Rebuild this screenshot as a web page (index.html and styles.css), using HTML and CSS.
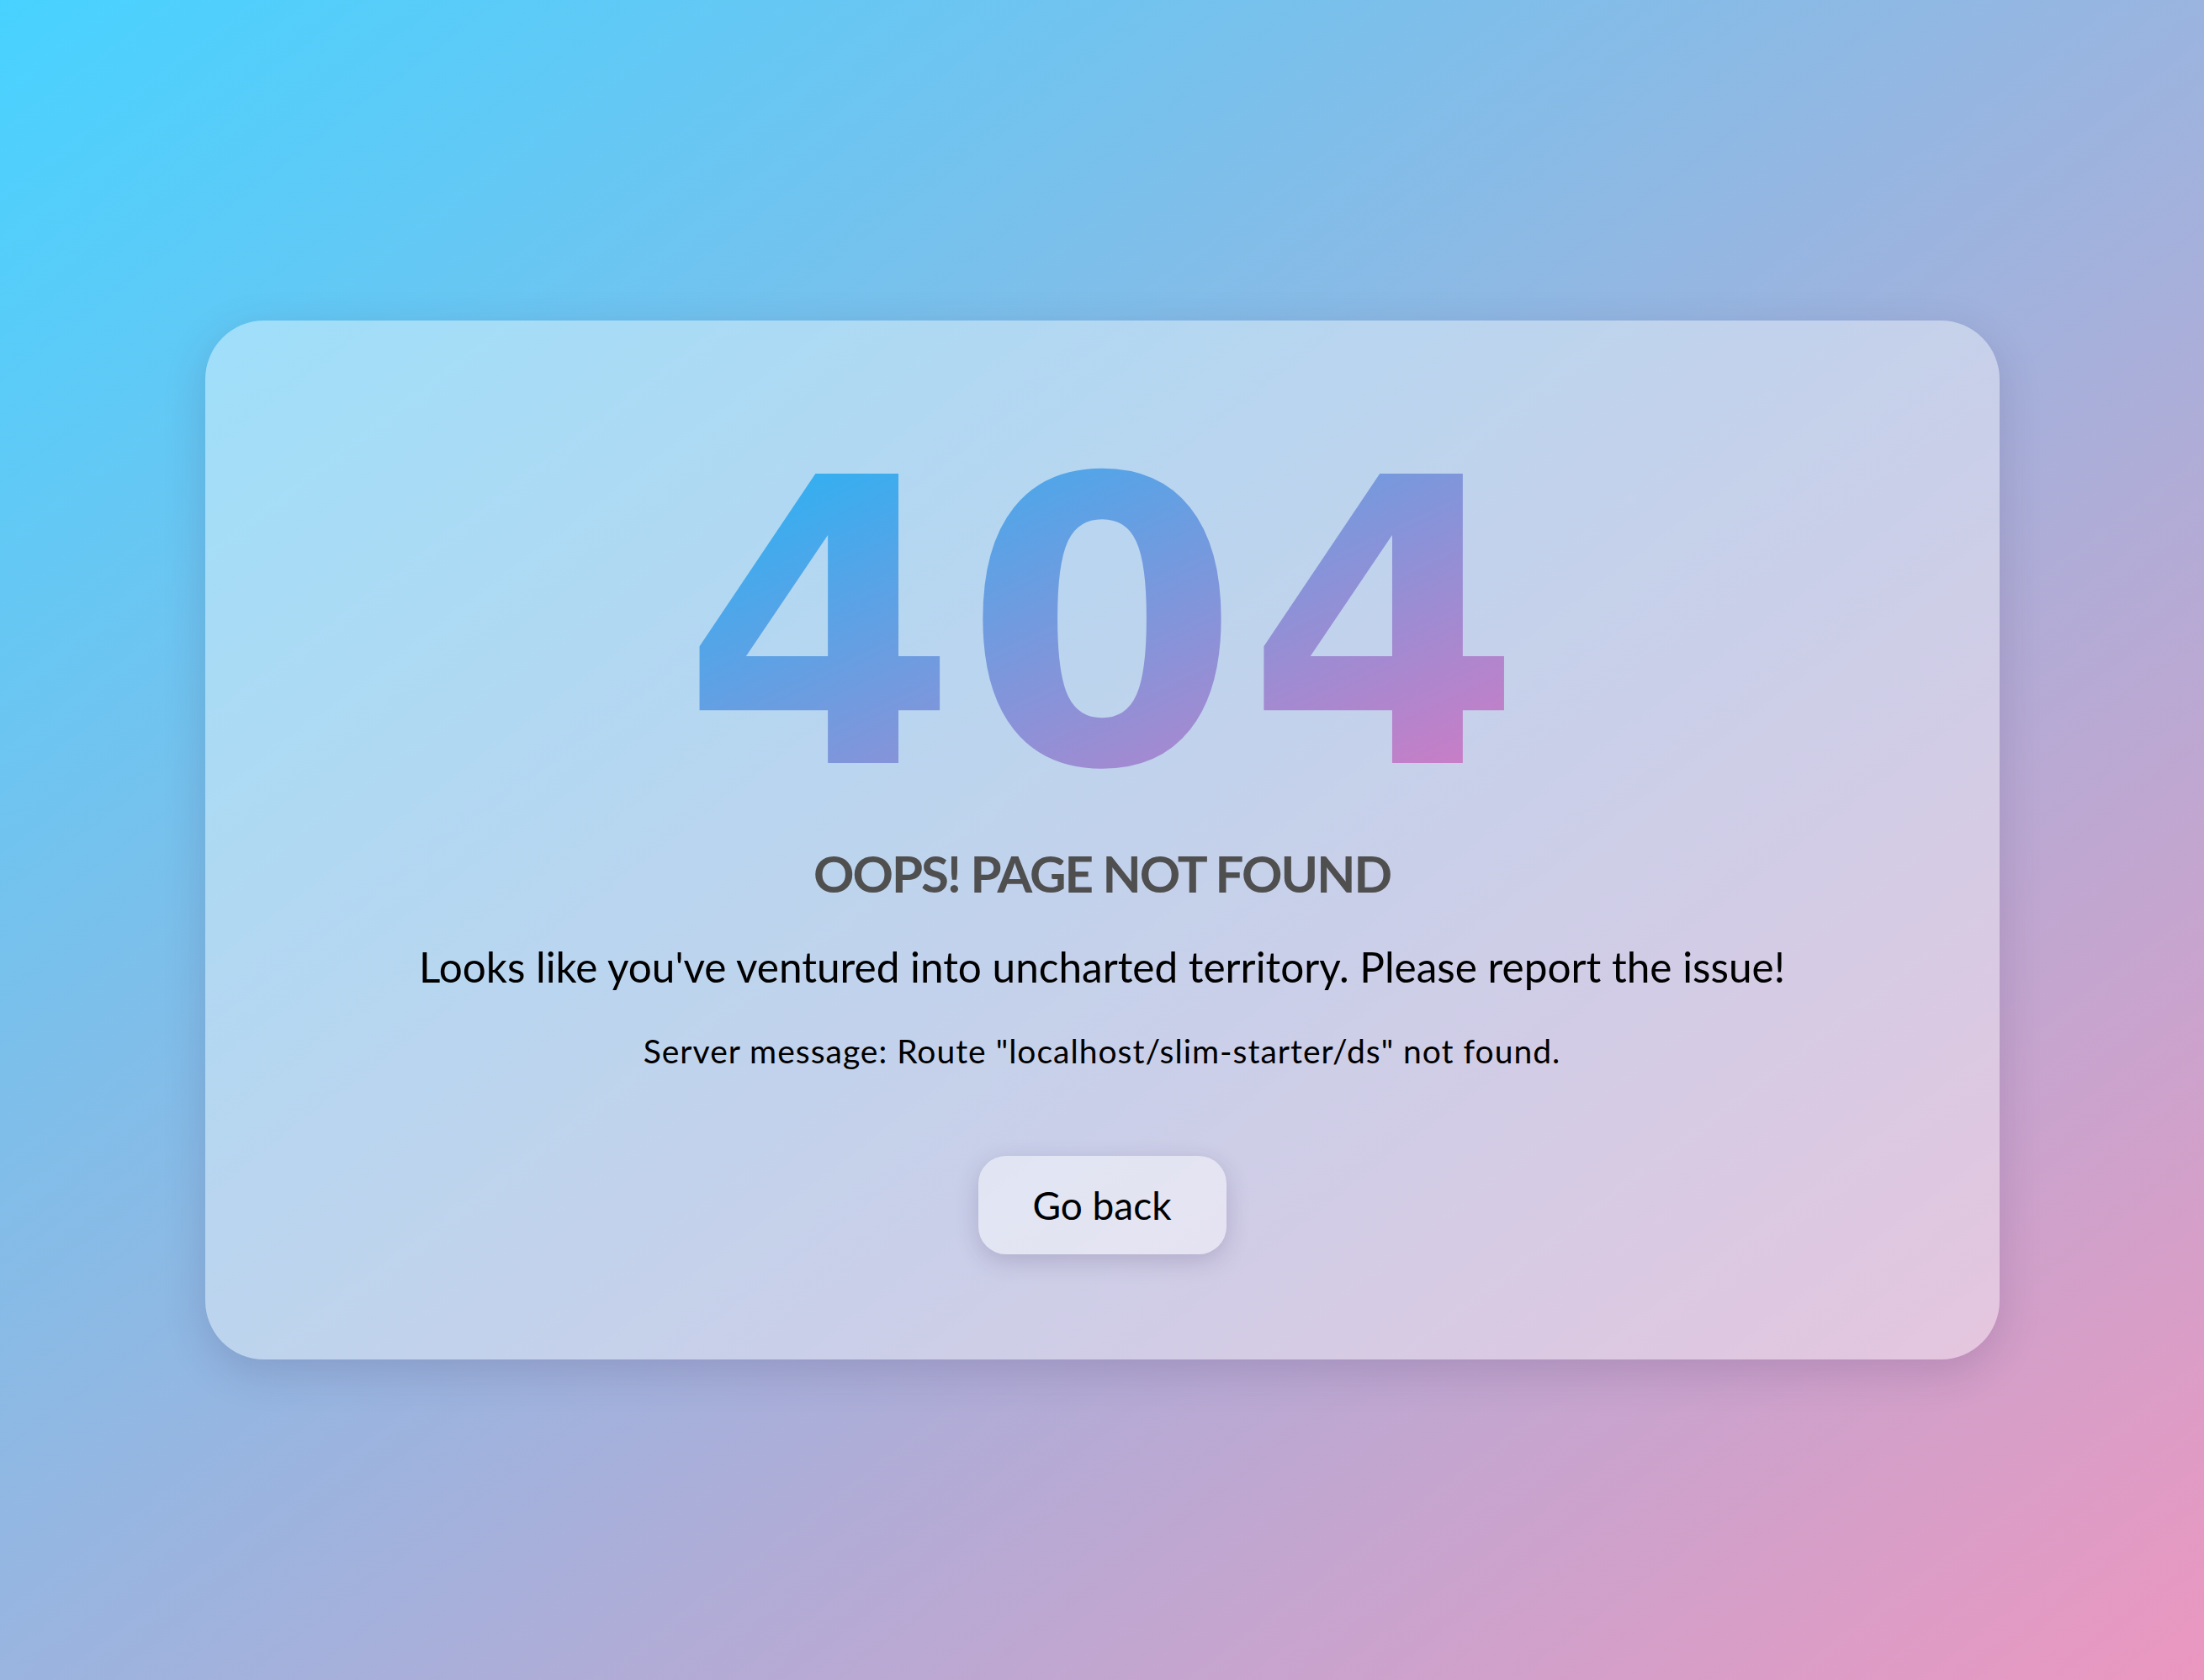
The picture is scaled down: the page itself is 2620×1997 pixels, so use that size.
FILE: index.html
```html
<!DOCTYPE html>
<html lang="en">
<head>
    <meta charset="UTF-8">
    <meta name="viewport" content="width=device-width, initial-scale=1.0">
    <title>404 - Page not found</title>
    <link rel="stylesheet" href="styles.css">
</head>
<body>
    <div class="error-card">
        <h1 class="error-code">404</h1>
        <h2 class="error-title">Oops! Page not found</h2>
        <p class="error-text">Looks like you've ventured into uncharted territory. Please report the issue!</p>
        <p class="error-server">Server message: Route "localhost/slim-starter/ds" not found.</p>
        <a href="javascript:history.back()" class="back-btn">Go back</a>
    </div>
</body>
</html>
```

FILE: styles.css
```css
html, body {
    height: 100%;
}
body {
    margin: 0;
    font-family: Lato, "Open Sans", sans-serif;
    background: linear-gradient(to bottom right, #48d2ff, #eb97c0);
    display: flex;
    align-items: center;
    justify-content: center;
}
.error-card {
    width: 2133px;
    box-sizing: border-box;
    padding: 127px 80px 125px;
    border-radius: 70px;
    background: rgba(255, 255, 255, 0.4);
    box-shadow: 0 14px 50px rgba(60, 40, 90, 0.18);
    text-align: center;
}
.error-code {
    width: fit-content;
    margin: 0 auto;
    padding-left: 7px;
    font-family: "DejaVu Sans", sans-serif;
    font-size: 472px;
    font-weight: 700;
    line-height: 1;
    letter-spacing: 7px;
    background: linear-gradient(to bottom right, #1ab8f8, #de76c0);
    -webkit-background-clip: text;
    background-clip: text;
    color: transparent;
}
.error-title {
    margin: 22px 0 0;
    font-size: 60px;
    font-weight: 700;
    letter-spacing: -2px;
    color: #4f4f4f;
    text-transform: uppercase;
}
.error-text {
    margin: 45px 0 0;
    font-size: 49.5px;
    color: #000;
}
.error-server {
    margin: 47px 0 0;
    font-size: 39px;
    letter-spacing: 1px;
    color: #000;
}
.back-btn {
    display: block;
    margin: 102px auto 0;
    width: 295px;
    height: 117px;
    line-height: 117px;
    border-radius: 33px;
    background: rgba(255, 255, 255, 0.45);
    box-shadow: 0 8px 28px rgba(60, 40, 90, 0.2);
    color: #000;
    font-size: 46px;
    text-decoration: none;
}
```
